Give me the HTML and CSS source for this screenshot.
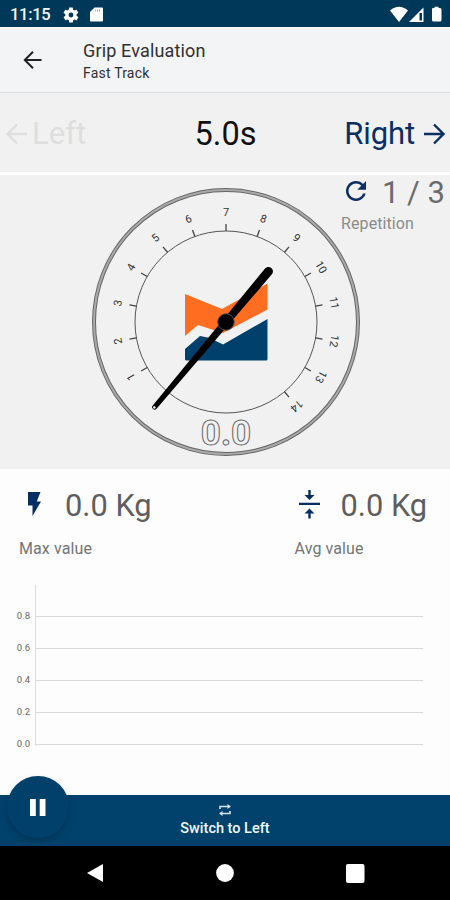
FILE: index.html
```html
<!DOCTYPE html>
<html lang="en">
<head>
<meta charset="utf-8">
<title>Grip Evaluation</title>
<link rel="stylesheet" href="styles.css">
</head>
<body>
<div class="screen">
  <header class="status">
    <span class="clock">11:15</span>
    <svg class="gear" width="18" height="18" viewBox="0 0 24 24"><path d="M19.4 13a7.500 7.500 0 0 0 0-2l2.100-1.600a.5.5 0 0 0 .1-.6l-2-3.500a.5.5 0 0 0-.6-.2l-2.500 1a7.300 7.300 0 0 0-1.700-1l-.4-2.600a.5.5 0 0 0-.5-.4h-4a.5.5 0 0 0-.5.4L9 5.100a7.600 7.600 0 0 0-1.700 1l-2.500-1a.5.5 0 0 0-.6.2l-2 3.500a.5.5 0 0 0 .1.600L4.500 11a7.900 7.900 0 0 0 0 2l-2.100 1.600a.5.5 0 0 0-.1.600l2 3.500c.1.200.4.300.6.200l2.500-1a7.300 7.300 0 0 0 1.700 1l.4 2.600c0 .2.200.4.500.4h4c.2 0 .5-.2.500-.4l.4-2.600a7.600 7.600 0 0 0 1.700-1l2.500 1c.2.100.5 0 .6-.2l2-3.500a.5.5 0 0 0-.1-.6zM12 15.200a3.200 3.200 0 1 1 0-6.400 3.200 3.200 0 0 1 0 6.400z"/></svg>
    <svg class="card" width="13" height="15" viewBox="0 0 13 15"><path d="M4.500.5H12a1 1 0 0 1 1 1v12a1 1 0 0 1-1 1H1a1 1 0 0 1-1-1V5z"/><path class="slots" d="M5.500 2.500v2M7.500 2.500v2M9.500 2.500v2"/></svg>
    <svg class="signals" width="53" height="17" viewBox="0 0 53 17"><path d="M0 4.500Q9-3 18 4.500L9 16z"/><path d="M19 16 33.500 1.500V16z"/><path class="cut" d="M29.500 7v7.500h2.500V7z"/><path d="M42 3q0-1 1-1h1.500V.8h4V2H50q1.500 0 1.500 1.500V14q0 1.500-1.500 1.500h-6.500Q42 15.500 42 14z"/></svg>
  </header>
  <div class="appbar">
    <svg class="back" width="20" height="20" viewBox="0 0 20 20"><path d="M18.500 10H2.500M10 1.800 1.800 10l8.200 8.200"/></svg>
    <div><h1>Grip Evaluation</h1><p>Fast Track</p></div>
  </div>
  <div class="hands">
    <div class="left"><svg width="22" height="22" viewBox="0 0 22 22"><path d="M21 11H2M11 1.500 1.500 11l9.500 9.500"/></svg><span>Left</span></div>
    <div class="timer">5.0s</div>
    <div class="right"><span>Right</span><svg width="22" height="22" viewBox="0 0 22 22"><path d="M1 11h19M11 1.500l9.500 9.500-9.500 9.500"/></svg></div>
  </div>
  <section class="gauge">
    <svg class="dial" width="272" height="272" viewBox="-136 -136 272 272">
      <circle class="rim" r="132"/><circle class="rim-core" r="132"/>
      <circle class="scale" r="91"/>
      <g class="ticks">
        <path transform="rotate(-120)" d="M0-91v-7"/><path transform="rotate(-100)" d="M0-91v-7"/>
        <path transform="rotate(-80)" d="M0-91v-7"/><path transform="rotate(-60)" d="M0-91v-7"/>
        <path transform="rotate(-40)" d="M0-91v-7"/><path transform="rotate(-20)" d="M0-91v-7"/>
        <path d="M0-91v-7"/><path transform="rotate(20)" d="M0-91v-7"/>
        <path transform="rotate(40)" d="M0-91v-7"/><path transform="rotate(60)" d="M0-91v-7"/>
        <path transform="rotate(80)" d="M0-91v-7"/><path transform="rotate(100)" d="M0-91v-7"/>
        <path transform="rotate(120)" d="M0-91v-7"/><path transform="rotate(140)" d="M0-91v-7"/>
      </g>
      <g class="numbers">
        <text transform="rotate(-120)" y="-106">1</text><text transform="rotate(-100)" y="-106">2</text>
        <text transform="rotate(-80)" y="-106">3</text><text transform="rotate(-60)" y="-106">4</text>
        <text transform="rotate(-40)" y="-106">5</text><text transform="rotate(-20)" y="-106">6</text>
        <text y="-106">7</text><text transform="rotate(20)" y="-106">8</text>
        <text transform="rotate(40)" y="-106">9</text><text transform="rotate(60)" y="-106">10</text>
        <text transform="rotate(80)" y="-106">11</text><text transform="rotate(100)" y="-106">12</text>
        <text transform="rotate(120)" y="-106">13</text><text transform="rotate(140)" y="-106">14</text>
      </g>
      <path class="orange" d="M-41-28-4-13 41.500-38.500v26L-3 11-28 3l-13 11z"/>
      <path class="navy" d="M-41 27-26 14-16 16-3 22.500 41.500-3v40q0 1.500-1.500 1.500h-79.500Q-41 38.500-41 37z"/>
      <g transform="rotate(40)"><path class="needle" d="M-4.500-66a4.500 4.500 0 0 1 9 0L2.500 111a2.500 2.500 0 0 1-5 0z"/><circle class="tip" cy="111.500" r="1.300"/></g>
      <circle class="hub" r="8.300"/>
      <text class="reading" y="123">0.0</text>
    </svg>
    <div class="reps">
      <div class="count"><svg width="24" height="24" viewBox="0 0 24 24"><path d="M17.650 6.350A8 8 0 1 0 19.730 14h-2.080A6 6 0 1 1 12 6c1.660 0 3.140.69 4.220 1.780L13 11h7V4z"/></svg><span>1 / 3</span></div>
      <p>Repetition</p>
    </div>
  </section>
  <section class="stats">
    <div class="stat">
      <div class="value"><svg width="31" height="30" viewBox="0 0 31 30"><path d="M9 2h12.500l-3.700 9.500H22L13.500 26V15.500H9z"/></svg><span>0.0 Kg</span></div>
      <p>Max value</p>
    </div>
    <div class="stat">
      <div class="value"><svg width="31" height="30" viewBox="0 0 31 30"><path d="M4 12.800h21v2.200H4zM13.300 0h2.400v5h3.800l-5 5-5-5h3.800zM13.300 28.500h2.400v-5h3.800l-5-5-5 5h3.800z"/></svg><span>0.0 Kg</span></div>
      <p>Avg value</p>
    </div>
  </section>
  <section class="chart">
    <div class="axis"><span>0.8</span><span>0.6</span><span>0.4</span><span>0.2</span><span>0.0</span></div>
    <div class="plot"><i></i><i></i><i></i><i></i><i></i></div>
  </section>
  <footer class="actions">
    <svg width="14" height="12" viewBox="0 0 14 12"><path d="M2 5V2.500H11M12 7v2.500H3"/><path class="heads" d="M9.500 0l3.500 2.500L9.500 5zM4.500 7 1 9.500 4.500 12z"/></svg>
    <span>Switch to Left</span>
    <button class="pause" aria-label="Pause"><svg width="16" height="17" viewBox="0 0 16 17"><path d="M0 0h5.800v17H0zM9.700 0h5.800v17H9.700z"/></svg></button>
  </footer>
  <nav class="system">
    <svg width="18" height="20" viewBox="0 0 18 20"><path d="M17 1v18L1 10z"/></svg>
    <svg width="18" height="18" viewBox="0 0 18 18"><circle cx="9" cy="9" r="8.900"/></svg>
    <svg width="19" height="19" viewBox="0 0 19 19"><rect width="18.500" height="19" rx="2"/></svg>
  </nav>
</div>
</body>
</html>
```
FILE: styles.css
```css
* { box-sizing: border-box; margin: 0; padding: 0; }
body { font-family: Roboto, "Liberation Sans", sans-serif; background: #fdfdfd; }
svg { display: block; flex: none; }
.screen { width: 450px; height: 900px; display: flex; flex-direction: column; overflow: hidden; }

.status { height: 27px; flex: none; background: #003859; color: #f3f6f9; fill: #fff; display: flex; align-items: center; padding: 2px 7px 0 10px; }
.clock { font-size: 16.500px; font-weight: 500; width: 52px; letter-spacing: -0.300px; }
.gear { margin-right: 10px; }
.slots { stroke: #9aabc0; stroke-width: 1; }
.signals { margin-left: auto; }
.cut { fill: #003859; }

.appbar { height: 66px; flex: none; background: #f3f4f6; border-bottom: 1px solid #dcdfe1; display: flex; align-items: center; padding: 2px 0 0 23px; color: #2f3032; }
.back { margin: -2px 40px 0 0; fill: none; stroke: #222; stroke-width: 2; }
.appbar h1 { font-size: 18px; line-height: 23px; font-weight: 400; letter-spacing: 0.150px; }
.appbar p { font-size: 14px; line-height: 20px; letter-spacing: 0.200px; padding-top: 1px; }

.hands { height: 82px; flex: none; background: #f1f1f1; border-bottom: 3px solid #fff; display: grid; grid-template-columns: 1fr auto 1fr; align-items: center; padding: 2px 5px 0 6px; font-size: 31px; }
.hands svg { fill: none; stroke: currentColor; stroke-width: 2.400; }
.left, .right { display: flex; align-items: center; }
.left { color: #dedede; gap: 4px; }
.right { color: #0b2f63; gap: 8px; justify-content: flex-end; }
.right span { letter-spacing: -0.100px; }
.timer { font-size: 32.500px; color: #111; }

.gauge { height: 294px; flex: none; background: #f1f1f1; position: relative; padding: 11px 0 0 90px; }
.rim { fill: none; stroke: #666; stroke-width: 4; }
.rim-core { fill: none; stroke: #aaa; stroke-width: 2; }
.scale { fill: none; stroke: #555; stroke-width: 1; }
.ticks { stroke: #444; stroke-width: 1.300; }
.numbers { font-size: 11px; text-anchor: middle; fill: #333; }
.orange { fill: #ff6d20; }
.navy { fill: #00406c; }
.needle { fill: #000; }
.tip { fill: #eee; }
.hub { fill: #000; stroke: #555; stroke-width: 1; }
.reading { font-size: 35px; font-weight: 700; text-anchor: middle; fill: #f1f1f1; stroke: #666; stroke-width: 1; }
.reps { position: absolute; left: 341px; top: 0; color: #6b6b6b; }
.count { display: flex; align-items: center; height: 34px; font-size: 31px; }
.count svg { width: 30px; height: 30px; fill: #0b2f63; margin: -3px 11px 0 0; }
.count span { white-space: nowrap; }
.reps p { margin-top: 2px; font-size: 16px; line-height: 26px; color: #8b8b8b; letter-spacing: 0.100px; }

.stats { height: 111px; flex: none; display: grid; grid-template-columns: 275.500px 1fr; padding: 18px 0 0 19px; }
.value { height: 36px; display: flex; align-items: center; gap: 15px; font-size: 30.800px; color: #5e5e5e; white-space: nowrap; }
.value svg { fill: #062e62; }
.stat p { margin-top: 16px; font-size: 16px; line-height: 20px; color: #757575; letter-spacing: 0.100px; }

.chart { height: 215px; flex: none; display: flex; padding-top: 5px; }
.axis { width: 36px; padding-top: 25px; font-size: 9.500px; line-height: 12px; color: #666; display: flex; flex-direction: column; gap: 20px; text-align: right; padding-right: 6px; }
.plot { width: 388px; height: 161px; border-left: 1px solid #ddd; margin-left: -1px; padding-top: 31px; display: flex; flex-direction: column; gap: 31px; }
.plot i { height: 1px; background: #d9d9d9; }

.actions { position: relative; height: 51px; flex: none; background: #00426c; color: #f4f7fa; display: flex; flex-direction: column; align-items: center; padding-top: 9px; gap: 4px; font-size: 14.500px; line-height: 18px; font-weight: 500; }
.actions > svg { fill: none; stroke: #d6e0e9; stroke-width: 1.600; }
.actions .heads { fill: #d6e0e9; stroke: none; }
.pause { position: absolute; left: 7px; top: -19px; width: 62px; height: 62px; border: 0; border-radius: 50%; background: #00406a; display: grid; place-items: center; fill: #fff; box-shadow: 0 4px 6px rgba(0,25,50,.3); }

.system { height: 54px; flex: none; background: #000; fill: #fff; display: flex; align-items: center; justify-content: space-between; padding: 0 85px 0 86px; }
```
